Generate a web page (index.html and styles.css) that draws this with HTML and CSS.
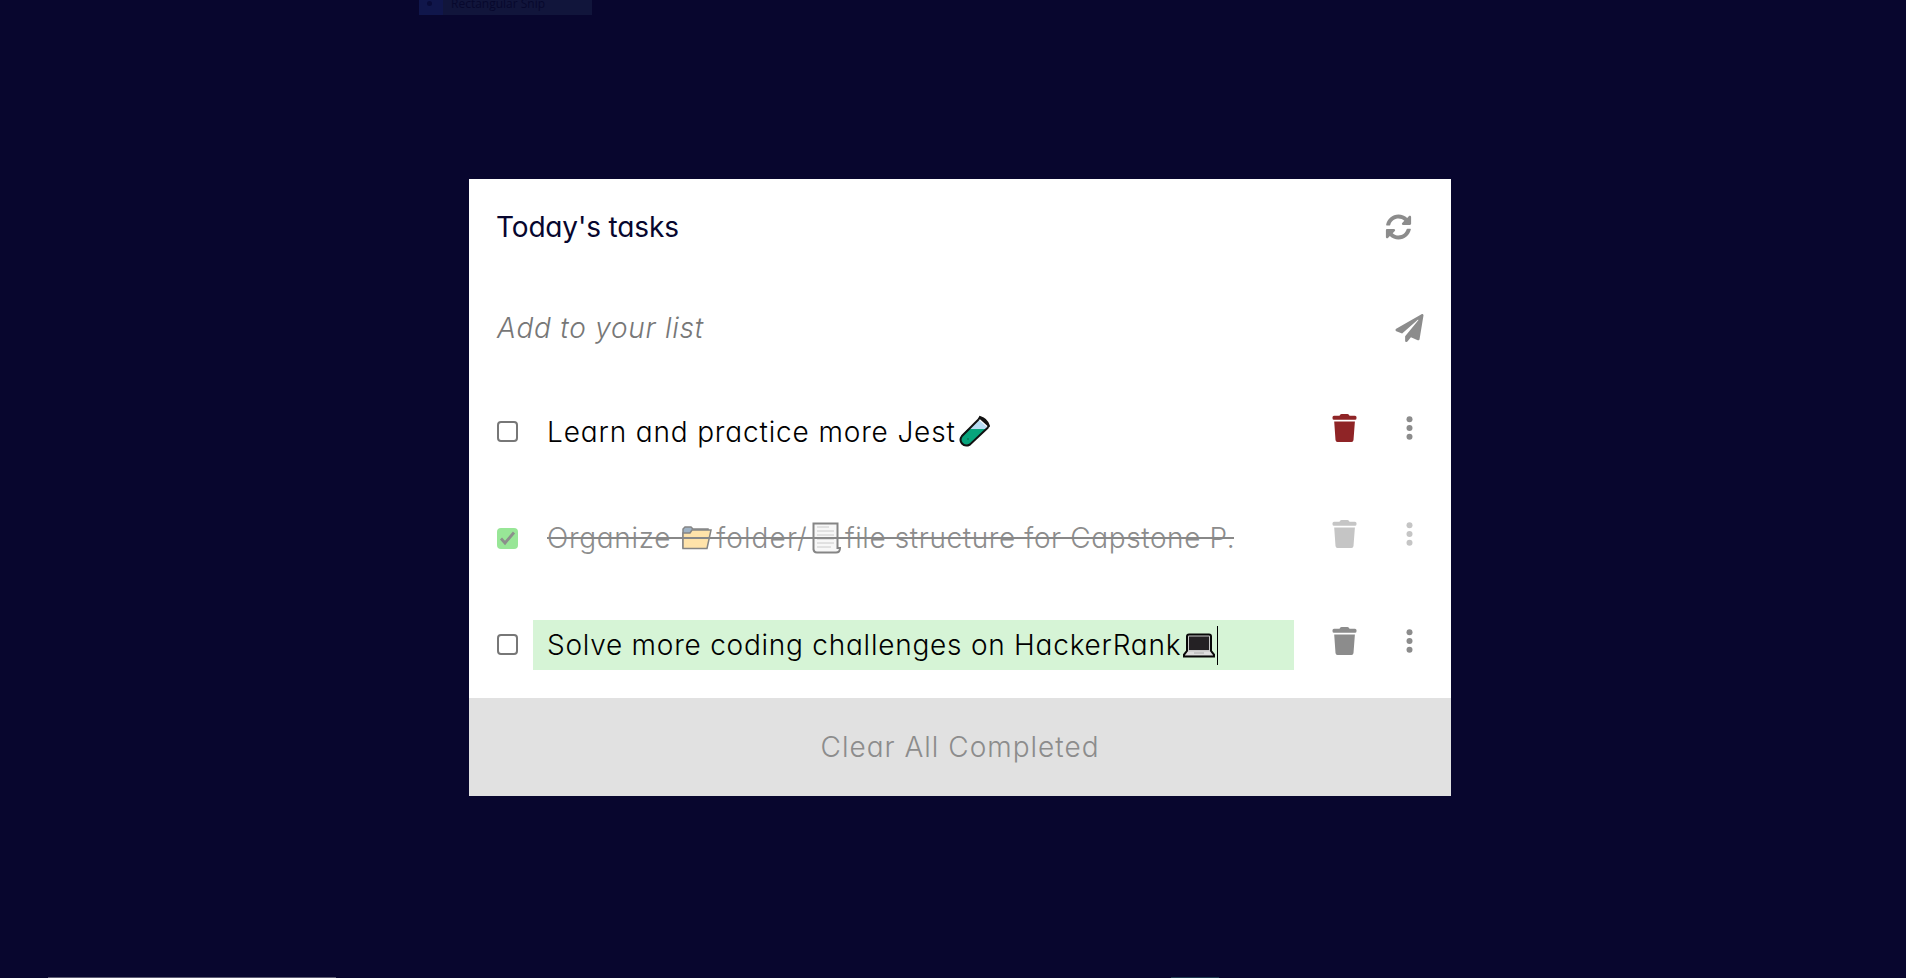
FILE: index.html
```
<!DOCTYPE html>
<html lang="en">
<head>
<meta charset="utf-8">
<title>Today's tasks</title>
<link rel="stylesheet" href="styles.css">
</head>
<body>
<svg width="0" height="0" class="defs">
  <symbol id="trash" viewBox="0 0 24 28"><path d="M1.500 1.700H7Q7.600 0 9 0h6q1.400 0 2 1.700h5.500a1.500 1.500 0 0 1 1.500 1.500v1a1.500 1.500 0 0 1-1.500 1.500h-21A1.500 1.500 0 0 1 0 4.200v-1a1.500 1.500 0 0 1 1.500-1.500zM1.700 7.600h20.700L21 26q-.2 2-2 2H5q-1.800 0-2-2z"/></symbol>
  <symbol id="dots" viewBox="0 0 6 24"><circle cx="3" cy="3.300" r="3"/><circle cx="3" cy="12" r="3"/><circle cx="3" cy="20.700" r="3"/></symbol>
</svg>
<div class="snip"><i></i><span>Rectangular Snip</span></div>
<main class="card">
  <header class="head">
    <h1 class="title">Today's tasks</h1>
    <svg class="sync" viewBox="0 0 512 512"><path d="M370.720 133.280C339.458 104.008 298.888 87.962 255.848 88c-77.458.068-144.328 53.178-162.791 126.850-1.344 5.363-6.122 9.150-11.651 9.150H24.103c-7.498 0-13.194-6.807-11.807-14.176C33.933 94.924 134.813 8 256 8c66.448 0 126.791 26.136 171.315 68.685L463.030 40.970C478.149 25.851 504 36.559 504 57.941V192c0 13.255-10.745 24-24 24H345.941c-21.382 0-32.090-25.851-16.971-40.971l41.750-41.749zM32 296h134.059c21.382 0 32.090 25.851 16.971 40.971l-41.750 41.750c31.262 29.273 71.835 45.319 114.876 45.280 77.418-.070 144.315-53.144 162.787-126.849 1.344-5.363 6.122-9.150 11.651-9.150h57.304c7.498 0 13.194 6.807 11.807 14.176C478.067 417.076 377.187 504 256 504c-66.448 0-126.791-26.136-171.315-68.685L48.970 471.030C33.851 486.149 8 475.441 8 454.059V320c0-13.255 10.745-24 24-24z"/></svg>
  </header>
  <div class="add">
    <span class="placeholder">Add to your list</span>
    <svg class="plane" viewBox="0 0 512 512"><path d="M476 3.200L12.500 270.600c-18.100 10.400-15.800 35.600 2.200 43.200L121 358.400l287.300-253.200c5.500-4.900 13.300 2.600 8.600 8.300L176 407v80.500c0 23.600 28.500 32.900 42.500 15.800L282 426l124.600 52.200c14.200 6 30.400-2.900 33-18.200l72-432C515 7.800 493.300-6.800 476 3.200z"/></svg>
  </div>
  <ul class="tasks">
    <li class="task">
      <span class="box"></span>
      <div class="text"><span class="t1">Learn and practice more Jest</span><svg class="flask" viewBox="0 0 32 32"><path d="M20 5L29 13 12 29Q7 32 3 28T2 22z" fill="#b9ddf4"/><path d="M9 14h18L12 29Q7 32 3 28t0-8z" fill="#08a47c"/><path d="M20 2l10 9M19.500 4.500L3 21q-3 4 0 7.500t8 1L29 12.500M19.500 4.500L21 2q7 2 9 9l-1.500 1.500" fill="none" stroke="#111" stroke-width="2"/><circle cx="9" cy="24" r="1" fill="#087c5c"/></svg></div>
      <svg class="trash red"><use href="#trash"/></svg><svg class="dots"><use href="#dots"/></svg>
    </li>
    <li class="task done">
      <span class="box"><svg viewBox="0 0 21 21"><path d="M4 10.500l4 4.500L17 4.500" fill="none" stroke="#8b8f8b" stroke-width="2.800"/></svg></span>
      <div class="text"><span class="t2">Organize</span><svg class="folder" viewBox="0 0 30 24"><path d="M1 22.500V3l2-2h6l2 2h15v3" fill="#9fb2c4" stroke="#858585" stroke-width="1.500"/><path d="M1 22.500V7h7l2-3h19l-4 18.500z" fill="#ffe3aa" stroke="#858585" stroke-width="1.500"/></svg><span class="t3">folder/</span><svg class="page" viewBox="0 0 30 32"><path d="M1.500 28V1.500h24V26H28q0 4.500-4 4.500H5q-3.500 0-3.500-4z" fill="#f7f7f7" stroke="#858585" stroke-width="2"/><path d="M5 5h12M5 9h17M5 13h17M5 17h17M5 21h17M5 25h14" stroke="#cacaca"/></svg><span class="t4">file structure for Capstone P.</span></div>
      <svg class="trash"><use href="#trash"/></svg><svg class="dots"><use href="#dots"/></svg>
    </li>
    <li class="task editing">
      <span class="box"></span>
      <div class="text"><span class="t5">Solve more coding challenges on HackerRank</span><svg class="laptop" viewBox="0 0 32 25"><path d="M6 1.500h20q2 0 2 2V18l3 3.500v2H1v-2L4 18V3.500q0-2 2-2z" fill="#c8c8c8" stroke="#080808" stroke-width="2"/><path d="M6 3.500h20V17H6z" fill="#242124"/><path d="M5 18.500h22l2 3.500H3z" fill="#dedede"/><path d="M11 20h10" stroke="#aaa"/></svg><i class="caret"></i></div>
      <svg class="trash"><use href="#trash"/></svg><svg class="dots"><use href="#dots"/></svg>
    </li>
  </ul>
  <footer class="clear"><span>Clear All Completed</span></footer>
</main>
<div class="edge"></div>
<div class="edge-short"></div>
</body>
</html>
```
FILE: styles.css
```
* { box-sizing: border-box; }
body {
  margin: 0;
  height: 978px;
  padding: 179px 0 0 469px;
  overflow: hidden;
  position: relative;
  background: #08062e;
  font-family: Inter, "Open Sans", sans-serif;
  font-feature-settings: "cv11";
  font-size: 28px;
  font-weight: 270;
  white-space: nowrap;
}
svg { display: block; flex: none; fill: #8c8c8c; }
.defs { position: absolute; }
.snip {
  position: absolute;
  left: 419px;
  top: 0;
  width: 173px;
  height: 15px;
  background: linear-gradient(90deg, #10164b 0 24px, #11153b 24px);
  color: #07082d;
  font: 12px/15px "Open Sans", sans-serif;
}
.snip span { position: absolute; left: 32px; top: -4px; }
.snip i { position: absolute; left: 8px; top: 1px; width: 5px; height: 5px; border-radius: 50%; background: #090b38; }
.card { width: 982px; height: 617px; background: #fff; }
.head { height: 98px; padding: 0 39px 2px 27px; display: flex; justify-content: space-between; align-items: center; }
.title { margin: 0; font-size: 28px; font-weight: 400; color: #07062e; letter-spacing: -0.15px; }
.sync { width: 27px; height: 26px; }
.add { height: 102px; padding: 0 27px 0 28px; display: flex; justify-content: space-between; align-items: center; }
.placeholder { font-style: italic; color: #777; letter-spacing: 0.75px; }
.plane { width: 29px; height: 28px; }
.tasks { height: 319px; margin: 0; padding: 0; list-style: none; }
.task { height: 106.5px; padding: 0 38px 0 28px; display: flex; align-items: center; }
.tasks .task:last-child { height: 106px; }
.box { width: 21px; height: 21px; flex: none; margin-top: -1px; border: 2px solid #777; border-radius: 4px; }
.done .box { border: 0; margin-top: 0; background: #98e697; }
.text { width: 761px; height: 50px; margin-left: 15px; padding-left: 14px; display: flex; align-items: center; flex: none; color: #000; }
.text span { margin-top: -1px; }
.t1 { letter-spacing: 0.85px; }
.t2 { letter-spacing: 0.7px; }
.t3 { letter-spacing: 1.1px; }
.t4 { letter-spacing: 0.6px; }
.t5 { letter-spacing: 0.76px; }
.done .text { color: #8c8c8c; position: relative; }
.done .text::after { content: ""; position: absolute; left: 14px; top: 23px; width: 687px; height: 2px; background: #888; }
.editing .text { background: #d6f4d6; }
.flask { width: 32px; height: 32px; margin: -2px 0 0 3px; }
.folder { width: 30px; height: 24px; margin: -1px 4px 0 11px; }
.page { width: 30px; height: 32px; margin: -2px 3px 0 4px; }
.laptop { width: 32px; height: 25px; margin-left: 2px; }
.caret { width: 1px; height: 39px; margin-left: 2px; background: #000; }
.trash { width: 25px; height: 28px; margin: -9px 0 0 38px; }
.dots { width: 7px; height: 24px; margin: -9px 0 0 49px; }
.red { fill: #8f2426; }
.done > .trash, .done > .dots { fill: #c5c5c5; }
.clear { height: 98px; padding-bottom: 1px; display: flex; justify-content: center; align-items: center; background: #e1e1e1; color: #8c8c8c; letter-spacing: 1px; }
.edge { position: absolute; left: 48px; top: 977px; width: 288px; height: 1px; background: #5c5b73; }
.edge-short { position: absolute; left: 1171px; top: 977px; width: 48px; height: 1px; background: #203951; }
```
